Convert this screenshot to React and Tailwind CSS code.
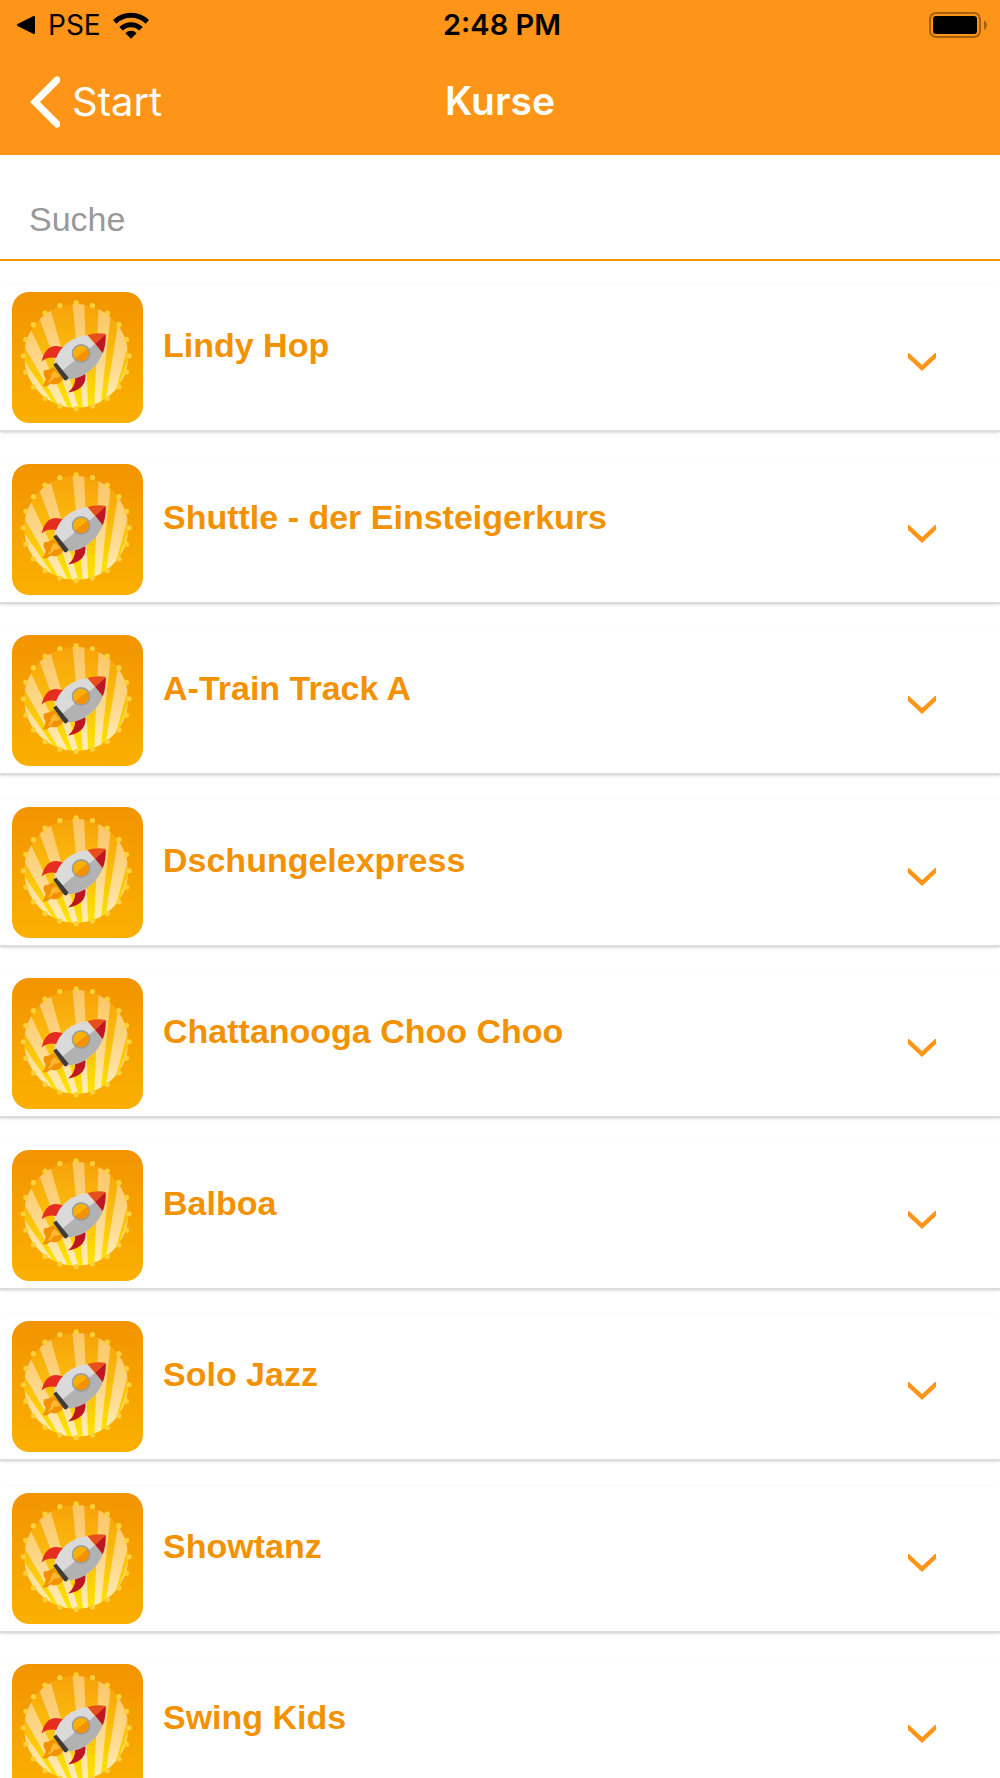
import { useState } from 'react';

const courses = [
  'Lindy Hop',
  'Shuttle - der Einsteigerkurs',
  'A-Train Track A',
  'Dschungelexpress',
  'Chattanooga Choo Choo',
  'Balboa',
  'Solo Jazz',
  'Showtanz',
  'Swing Kids',
];

// bulbs around the disc
const dots = Array.from({ length: 20 }, (_, i) => {
  const angle = (i * Math.PI) / 10;
  return { x: 214 + 159 * Math.sin(angle), y: 213 - 159 * Math.cos(angle) };
});

function IconDefs() {
  return (
    <svg className="absolute h-0 w-0" aria-hidden="true">
      <defs>
        <linearGradient id="tile" x1="0" y1="0" x2="0" y2="1">
          <stop offset="0" stopColor="#f29400" />
          <stop offset="1" stopColor="#fbb000" />
        </linearGradient>
        <linearGradient id="disc" x1="0" y1="0" x2="0" y2="1">
          <stop offset="0" stopColor="#f7a20a" />
          <stop offset="0.5" stopColor="#fbbd0c" />
          <stop offset="1" stopColor="#ffe600" />
        </linearGradient>
        <linearGradient id="rays" x1="0" y1="56" x2="0" y2="370" gradientUnits="userSpaceOnUse">
          <stop offset="0" stopColor="#fdc562" />
          <stop offset="0.5" stopColor="#fdd685" />
          <stop offset="1" stopColor="#fdeebb" />
        </linearGradient>
        <clipPath id="discClip">
          <circle cx="214" cy="213" r="156" />
        </clipPath>
      </defs>
    </svg>
  );
}

function RocketIcon() {
  return (
    <svg viewBox="21 21 394 394" className="size-[131px] shrink-0" aria-hidden="true">
      <rect x="21" y="21" width="394" height="394" rx="52" fill="url(#tile)" />
      <circle cx="214" cy="213" r="156" fill="url(#disc)" />
      <g clipPath="url(#discClip)" fill="url(#rays)">
        <path d="M50 262 L48 215 L150 362 L128 352Z" />
        <path d="M56 182 L78 135 L192 376 L166 370Z" />
        <path d="M102 96 L137 74 L222 376 L205 376Z" />
        <path d="M202 50 L238 50 L250 376 L235 376Z" />
        <path d="M282 55 L320 70 L286 376 L268 376Z" />
        <path d="M342 106 L376 160 L324 350 L300 362Z" />
        <path d="M380 195 L376 255 L352 310 L336 328Z" />
      </g>
      {dots.map((dot) => (
        <circle key={`${dot.x}-${dot.y}`} cx={dot.x} cy={dot.y} r="8" fill="#fcd03a" />
      ))}
      <path d="M110 230 Q124 168 177 188 L156 220 Q128 214 110 230Z" fill="#e52e20" />
      <path d="M190 323 Q212 305 211 280 L241 262 Q250 312 190 323Z" fill="#be1622" />
      <path d="M146 246 Q132 258 118 256 Q112 268 122 280 Q122 294 112 304 Q126 308 138 296 Q162 306 176 280Z" fill="#f39200" />
      <path d="M150 258 Q136 268 138 280 Q132 290 126 296 Q142 290 148 278 Q158 282 166 274Z" fill="#fbb830" />
      <path d="M148 236 C160 195 185 160 248 150 L294 205 C275 250 240 278 190 284Z" fill="#dadada" />
      <path d="M169 260 L271 177 L294 205 C275 250 240 278 190 284Z" fill="#b2b2b2" />
      <path d="M248 150 Q274 142 303 147 L271 177Z" fill="#e84e1b" />
      <path d="M303 147 Q304 180 294 205 L271 177Z" fill="#be1622" />
      <path d="M145 240 L154 233 L191 278 L185 287 L178 286Z" fill="#3c3c3b" />
      <circle cx="229" cy="206" r="25" fill="#fbb000" />
      <path d="M209 222 L249 190 A25 25 0 0 1 209 222Z" fill="#f39200" />
      <circle cx="229" cy="206" r="26" fill="none" stroke="#9d9d9c" strokeWidth="5" />
    </svg>
  );
}

function StatusBar() {
  return (
    <div className="grid h-[50px] grid-cols-3 items-center pr-3 pl-4 text-[28px] text-black">
      <div className="flex items-center gap-3">
        <svg viewBox="0 0 20 20" className="size-5" aria-hidden="true">
          <path d="M2 10 L18 2 V18Z" fill="currentColor" stroke="currentColor" strokeWidth="2" strokeLinejoin="round" />
        </svg>
        <span>PSE</span>
        <svg viewBox="0 0 108 80" className="h-[27px] w-9" aria-hidden="true">
          <g fill="none" stroke="currentColor" strokeWidth="15">
            <path d="M5 29 A71 71 0 0 1 103 29" />
            <path d="M24 50 A43 43 0 0 1 84 50" />
          </g>
          <path d="M37 63 A24 24 0 0 1 71 63 L54 80Z" fill="currentColor" />
        </svg>
      </div>
      <div className="text-center text-[29px] font-semibold">2:48 PM</div>
      <svg viewBox="0 0 60 28" className="h-7 w-[60px] justify-self-end" aria-hidden="true">
        <rect x="2" y="2" width="50" height="24" rx="6" fill="none" stroke="#a5610f" strokeWidth="2" />
        <rect x="5" y="5" width="44" height="18" rx="3" fill="#000" />
        <path d="M56 9 Q62 14 56 19Z" fill="#a5610f" />
      </svg>
    </div>
  );
}

function CourseRow({ title }) {
  return (
    <li className="border-b-2 border-[#dcdcdc] bg-white shadow-sm odd:mb-[25px] even:mb-6">
      <button type="button" className="flex w-full items-center gap-5 py-[7px] pr-16 pl-3 text-left">
        <RocketIcon />
        <span className="flex-1 pb-[26px] text-[34px] leading-10 font-bold text-[#f39200]">{title}</span>
        <svg viewBox="0 0 28 18" className="mt-2 h-[18px] w-7" aria-hidden="true">
          <path d="M0 0 L1 0 L14 12 L27 0 L28 0 V5 L14 18 L0 5Z" fill="#ff9518" />
        </svg>
      </button>
    </li>
  );
}

function App() {
  const [query, setQuery] = useState('');
  const visible = courses.filter((title) => title.toLowerCase().includes(query.toLowerCase()));

  return (
    <div className="h-screen overflow-hidden bg-white font-['Liberation_Sans',Arial,sans-serif]">
      <IconDefs />
      <header className="bg-[#ff9518] font-['Inter',sans-serif]">
        <StatusBar />
        <nav className="grid h-[105px] grid-cols-3 items-center px-[30px] pb-[2px] text-[40px] text-white">
          <a href="#start" className="flex items-center gap-3">
            <svg viewBox="0 0 30 52" className="h-[52px] w-[30px]" aria-hidden="true">
              <path d="M27 4 L5 26 L27 48" fill="none" stroke="currentColor" strokeWidth="7" strokeLinecap="round" />
            </svg>
            Start
          </a>
          <h1 className="text-center text-[39px] font-semibold">Kurse</h1>
        </nav>
      </header>
      <input
        type="search"
        aria-label="Suche"
        placeholder="Suche"
        value={query}
        onChange={(e) => setQuery(e.target.value)}
        className="block h-[106px] w-full border-b-2 border-[#f39200] px-[29px] pt-6 text-[34px] outline-none placeholder:text-[#999999]"
      />
      <ul className="pt-6">
        {visible.map((title) => (
          <CourseRow key={title} title={title} />
        ))}
      </ul>
    </div>
  );
}

export default App;
